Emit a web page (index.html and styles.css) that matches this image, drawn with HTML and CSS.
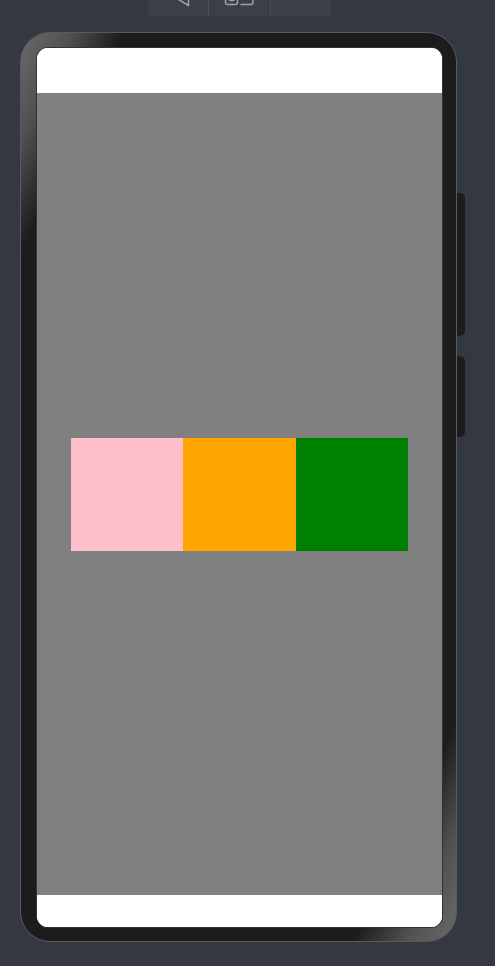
FILE: index.html
```html
<!DOCTYPE html>
<html>
<head>
<meta charset="utf-8">
<link rel="stylesheet" href="styles.css">
</head>
<body>
<div class="toolbar">
  <div class="tool">
    <svg class="ico" width="60" height="16" viewBox="0 0 60 16">
      <path d="M40.5 -12 L40.5 5.5 L25.5 -3.5 Z" fill="none" stroke="#9ea2aa" stroke-width="1.5" stroke-linejoin="round"/>
    </svg>
  </div>
  <div class="tool">
    <svg class="ico" width="62" height="16" viewBox="0 0 62 16">
      <rect x="16.5" y="-10" width="12" height="14.5" rx="2" fill="none" stroke="#9ea2aa" stroke-width="1.5"/>
      <rect x="20.5" y="-4" width="4.5" height="4.5" rx="1" fill="none" stroke="#9ea2aa" stroke-width="1.5"/>
      <path d="M31.5 4.5 L42 4.5 Q44 4.5 44 2.5 L44 -10" fill="none" stroke="#9ea2aa" stroke-width="1.5"/>
    </svg>
  </div>
  <div class="tool"></div>
</div>
<div class="device">
  <div class="phone">
    <div class="screen">
      <div class="bar-top"></div>
      <div class="stage">
        <div class="row">
          <div class="box pink"></div>
          <div class="box orange"></div>
          <div class="box green"></div>
        </div>
      </div>
      <div class="bar-bottom"></div>
    </div>
  </div>
  <div class="side">
    <div class="btn btn-long"></div>
    <div class="btn btn-short"></div>
  </div>
</div>
</body>
</html>
```
FILE: styles.css
```css
html, body {
  margin: 0;
  padding: 0;
  background: #333842;
  width: 495px;
  height: 966px;
  overflow: hidden;
}
.toolbar {
  display: flex;
  margin-left: 148px;
  width: 183px;
  height: 16px;
  background: #3b3f48;
}
.tool {
  height: 16px;
  overflow: hidden;
}
.tool:nth-child(1) { width: 60px; border-right: 1px solid #4b4f58; }
.tool:nth-child(2) { width: 61px; border-right: 1px solid #4b4f58; }
.tool:nth-child(3) { flex: 1; }
.ico { display: block; }
.device {
  display: flex;
  align-items: flex-start;
  margin-top: 16px;
  margin-left: 20px;
}
.phone {
  box-sizing: border-box;
  width: 437px;
  height: 910px;
  border: 1px solid #5a5a5a;
  border-radius: 30px;
  padding: 15px 14px 14px 16px;
  background: linear-gradient(115deg, #6a6a6a 0%, #505050 6%, #1c1c1c 12%, #1c1c1c 88%, #505050 94%, #6a6a6a 100%);
}
.screen {
  width: 405px;
  height: 879px;
  border-radius: 11px;
  overflow: hidden;
  display: flex;
  flex-direction: column;
  background: #ffffff;
  box-shadow: 0 0 0 1px #333333;
}
.bar-top { height: 45px; background: #ffffff; }
.bar-bottom { height: 32px; background: #ffffff; }
.stage {
  flex: 1;
  background: #808080;
  display: flex;
  align-items: center;
  justify-content: center;
}
.row {
  display: flex;
  width: 337px;
  height: 113px;
}
.box { flex: 1; }
.pink { background: #ffc0cb; }
.orange { background: #ffa500; }
.green { background: #008000; }
.side {
  display: flex;
  flex-direction: column;
  gap: 20px;
  margin-top: 161px;
}
.btn {
  width: 8px;
  background: #1c1c1c;
  border-radius: 0 5px 5px 0;
}
.btn-long { height: 143px; }
.btn-short { height: 81px; }
```
